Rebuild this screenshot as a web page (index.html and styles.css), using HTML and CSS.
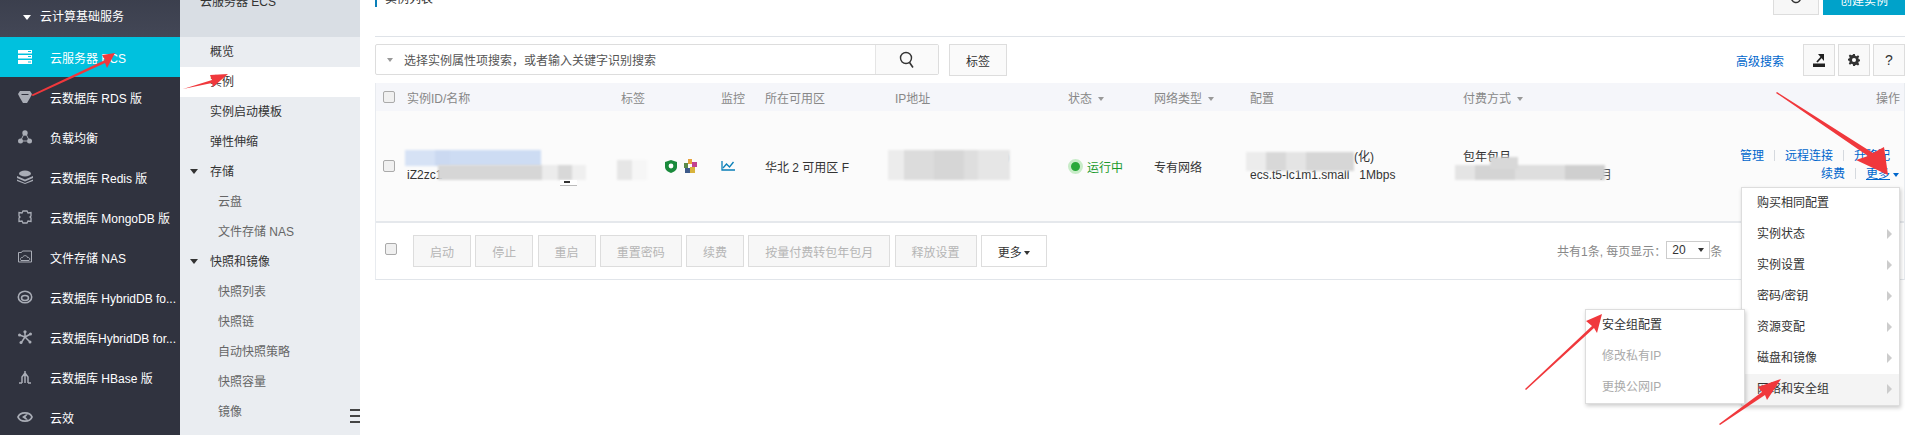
FILE: index.html
```html
<!DOCTYPE html>
<html lang="zh-CN">
<head>
    <meta charset="UTF-8">
    <title>云服务器 ECS - 实例列表</title>
    <link rel="stylesheet" href="styles.css">
</head>
<body>
    <div class="app">
        <aside class="sidebar">
            <div class="side-head"><span class="caret caret-white"></span>云计算基础服务</div>
            <a class="side-item active">
                <svg class="side-icon" viewBox="0 0 14 14"><path d="M0 0h14v3.600H0zM0 5h14v3.600H0zM0 10h14v4H0z" fill="#fff"/><path d="M10 1.500h3M10 6.500h3M10 12h3" stroke="#00c1de" stroke-width="1"/></svg>
                <span>云服务器 ECS</span>
            </a>
            <a class="side-item">
                <svg class="side-icon" viewBox="0 0 14 14"><path d="M2 1h10l2 3-2 4-3 5H5L2 8 0 4z" fill="#a9adb6"/><path d="M3.500 4.500h7" stroke="#30333f"/></svg>
                <span>云数据库 RDS 版</span>
            </a>
            <a class="side-item">
                <svg class="side-icon" viewBox="0 0 14 14"><g fill="#a9adb6"><circle cx="7" cy="3" r="2.700"/><circle cx="2.500" cy="11" r="2.500"/><circle cx="11.500" cy="11" r="2.500"/></g><path d="M5.500 5 3.500 9M8.500 5l2 4M5 11h4" stroke="#a9adb6"/></svg>
                <span>负载均衡</span>
            </a>
            <a class="side-item">
                <svg class="side-icon side-icon-wide" viewBox="0 0 16 14"><g fill="#a9adb6"><ellipse cx="8" cy="3.500" rx="6" ry="3"/><path d="M0 6l8 3.500L16 6v2l-8 3.500L0 8zM0 9.500 8 13l8-3.500V11l-8 3-8-3z"/></g></svg>
                <span>云数据库 Redis 版</span>
            </a>
            <a class="side-item">
                <svg class="side-icon" viewBox="0 0 14 14"><path d="M5 1h4l1 2 3-.5V6l-1 1 1 1v3.500L10 11l-1 2H5l-1-2-3 .5V8l1-1-1-1V2.500L4 3z" fill="none" stroke="#a9adb6" stroke-width="1.300"/></svg>
                <span>云数据库 MongoDB 版</span>
            </a>
            <a class="side-item">
                <svg class="side-icon" viewBox="0 0 14 14"><path d="M.5 2.500h3l1-1.500h9v11H.5z" fill="none" stroke="#a9adb6"/><path d="M3 10.500c-1.500-2 .5-3.500 1.500-3C5.500 5 9 5 9.500 7.500c2-.5 3 2 1.500 3z" fill="none" stroke="#a9adb6"/></svg>
                <span>文件存储 NAS</span>
            </a>
            <a class="side-item">
                <svg class="side-icon side-icon-wide" viewBox="0 0 15 14"><ellipse cx="7.500" cy="7" rx="6.700" ry="5.800" fill="none" stroke="#a9adb6" stroke-width="1.600"/><ellipse cx="7.500" cy="8" rx="3.500" ry="2.500" fill="none" stroke="#a9adb6" stroke-width="1.500"/></svg>
                <span>云数据库 HybridDB fo...</span>
            </a>
            <a class="side-item">
                <svg class="side-icon" viewBox="0 0 14 14"><path d="M7 1v6M7 7 1.500 5M7 7l5.500-3M7 7l-4 6M7 7l5 5" stroke="#a9adb6" stroke-width="1.500"/><g fill="#a9adb6"><circle cx="7" cy="1.800" r="1.600"/><circle cx="1.500" cy="5" r="1.500"/><circle cx="12.500" cy="4" r="1.500"/><circle cx="3" cy="12.500" r="1.500"/><circle cx="12" cy="12" r="1.500"/></g></svg>
                <span>云数据库HybridDB for...</span>
            </a>
            <a class="side-item">
                <svg class="side-icon" viewBox="0 0 14 14"><path d="M7 1v12M7 3 4 7v6M7 3l3 4v6M1 13h3M10 13h3" fill="none" stroke="#a9adb6" stroke-width="1.500"/></svg>
                <span>云数据库 HBase 版</span>
            </a>
            <a class="side-item">
                <svg class="side-icon side-icon-wide" viewBox="0 0 16 14"><path d="M1 7C3 1.500 13 1.500 15 7 13 12.500 3 12.500 1 7z" fill="none" stroke="#a9adb6" stroke-width="1.800"/><path d="M5 7l4-2.800h2L8.500 7 11 9.800H9z" fill="#a9adb6"/></svg>
                <span>云效</span>
            </a>
        </aside>

        <nav class="subnav">
            <div class="subnav-head">云服务器 ECS</div>
            <a class="sub-item">概览</a>
            <a class="sub-item current">实例</a>
            <a class="sub-item">实例启动模板</a>
            <a class="sub-item">弹性伸缩</a>
            <a class="sub-item"><span class="caret caret-dark"></span>存储</a>
            <a class="sub-item child">云盘</a>
            <a class="sub-item child">文件存储 NAS</a>
            <a class="sub-item"><span class="caret caret-dark"></span>快照和镜像</a>
            <a class="sub-item child">快照列表</a>
            <a class="sub-item child">快照链</a>
            <a class="sub-item child">自动快照策略</a>
            <a class="sub-item child">快照容量</a>
            <a class="sub-item child">镜像</a>
        </nav>

        <main class="main">
            <header class="page-head">
                <h2 class="page-title">实例列表</h2>
                <div class="page-actions">
                    <button class="btn btn-refresh">
                        <svg width="14" height="14" viewBox="0 0 14 14"><path d="M11.500 7a4.500 4.500 0 1 1-2-3.700" fill="none" stroke="#333" stroke-width="1.500"/><path d="M8 0v6l3.500-3z" fill="#333"/></svg>
                    </button>
                    <button class="btn btn-primary">创建实例</button>
                </div>
            </header>

            <div class="toolbar">
                <div class="search">
                    <span class="caret caret-grey"></span>
                    <span class="search-text">选择实例属性项搜索，或者输入关键字识别搜索</span>
                    <span class="search-btn">
                        <svg width="16" height="18" viewBox="0 0 16 18"><circle cx="7" cy="7" r="5.500" fill="none" stroke="#333" stroke-width="1.400"/><path d="M10.500 11.500 14 16.500" stroke="#333" stroke-width="1.600"/></svg>
                    </span>
                </div>
                <button class="btn btn-tag">标签</button>
                <div class="toolbar-right">
                    <a class="link adv-link">高级搜索</a>
                    <button class="btn btn-icon">
                        <svg width="12" height="13" viewBox="0 0 12 13"><path d="M0 9.500h12V13H0z" fill="#222"/><path d="M4 8 8.500 3" stroke="#222" stroke-width="1.800"/><path d="M5 0h6v7z" fill="#222"/></svg>
                    </button>
                    <button class="btn btn-icon">
                        <svg width="12" height="12" viewBox="0 0 14 14"><path d="M6 0h2l.4 2 1.500.6L11.700 1.500l1.400 1.400-1.100 1.800.6 1.500 2 .4v1.800l-2 .4-.6 1.500 1.100 1.800-1.400 1.400-1.800-1.100-1.500.6L8 14H6l-.4-2-1.500-.6-1.800 1.100L.9 11.100 2 9.300l-.6-1.500-2-.4V5.600l2-.4.6-1.500-1.100-1.800L2.300 .5l1.800 1.100L5.600 1z" fill="#333"/><circle cx="7" cy="7" r="2.400" fill="#fff"/></svg>
                    </button>
                    <button class="btn btn-icon">?</button>
                </div>
            </div>

            <section class="table">
                <div class="cols table-head">
                    <span><i class="check"></i></span>
                    <span>实例ID/名称</span>
                    <span>标签</span>
                    <span>监控</span>
                    <span>所在可用区</span>
                    <span>IP地址</span>
                    <span>状态<i class="caret caret-grey caret-after"></i></span>
                    <span>网络类型<i class="caret caret-grey caret-after"></i></span>
                    <span>配置</span>
                    <span>付费方式<i class="caret caret-grey caret-after"></i></span>
                    <span class="align-right">操作</span>
                </div>
                <div class="cols table-row">
                    <span><i class="check"></i></span>
                    <span class="two-lines">
                        <a class="link">&nbsp;</a>
                        <span class="id-text">iZ2zc1</span>
                    </span>
                    <span class="tag-icons">
                        <svg width="12" height="13" viewBox="0 0 12 13"><path d="M6 0l6 2v5c0 3-3 5-6 6-3-1-6-3-6-6V2z" fill="#1a8a3c"/><circle cx="6" cy="6" r="2.400" fill="#fff"/></svg>
                        <svg width="14" height="14" viewBox="0 0 14 14"><path d="M5 0h4v5H5z" fill="#e8a33d"/><path d="M9 3h5v5H9z" fill="#c2408f"/><path d="M7 8h5v6H7z" fill="#d8b33c"/><path d="M1 4h4v5H1z" fill="#5b8a4a"/><path d="M2 9h5v5H2z" fill="#3d5a8a"/></svg>
                    </span>
                    <span>
                        <svg class="monitor" width="14" height="10" viewBox="0 0 14 10"><path d="M1 0v9h13" fill="none" stroke="#0a7fb8" stroke-width="1.300"/><path d="M2 7l3.500-4 3 3 4-5" fill="none" stroke="#0a7fb8" stroke-width="1.300"/></svg>
                    </span>
                    <span class="zone">华北 2 可用区 F</span>
                    <span class="ip-cell"><span class="ip-end">1)</span></span>
                    <span class="status"><i class="status-dot"></i>运行中</span>
                    <span class="zone">专有网络</span>
                    <span class="two-lines">
                        <span class="config-top">(化)</span>
                        <span>ecs.t5-lc1m1.small &nbsp; 1Mbps</span>
                    </span>
                    <span class="two-lines">
                        <span>包年包月</span>
                        <span class="pay-end">月</span>
                    </span>
                    <span class="row-actions">
                        <span class="action-line action-first"><a class="link">管理</a><i class="sep"></i><a class="link">远程连接</a><i class="sep"></i><a class="link">升降配</a></span>
                        <span class="action-line"><a class="link">续费</a><i class="sep"></i><a class="link more-link">更多</a><i class="caret caret-blue"></i></span>
                    </span>

                    <div class="mask mask-name"></div>
                    <div class="mask mask-id"></div>
                    <div class="mask-copy"></div>
                    <div class="mask mask-tag"></div>
                    <div class="mask mask-ip"></div>
                    <div class="mask mask-config"></div>
                    <div class="mask mask-pay"></div>
                    <div class="mask mask-pay-top"></div>
                </div>
                <div class="table-foot">
                    <i class="check check-foot"></i>
                    <div class="foot-btns">
                        <button class="btn btn-off">启动</button>
                        <button class="btn btn-off">停止</button>
                        <button class="btn btn-off">重启</button>
                        <button class="btn btn-off">重置密码</button>
                        <button class="btn btn-off">续费</button>
                        <button class="btn btn-off">按量付费转包年包月</button>
                        <button class="btn btn-off">释放设置</button>
                        <button class="btn btn-more">更多<i class="caret caret-black"></i></button>
                    </div>
                    <div class="pager">
                        <span>共有1条, 每页显示：</span><span class="page-size">20<i class="caret caret-black"></i></span><span>条</span>
                    </div>
                </div>
            </section>
        </main>
    </div>

    <div class="collapse-tab"><i></i><i></i><i></i></div>

    <ul class="menu menu-more">
        <li>购买相同配置</li>
        <li class="has-sub">实例状态</li>
        <li class="has-sub">实例设置</li>
        <li class="has-sub">密码/密钥</li>
        <li class="has-sub">资源变配</li>
        <li class="has-sub">磁盘和镜像</li>
        <li class="has-sub hovered">网络和安全组</li>
    </ul>
    <ul class="menu menu-sub">
        <li>安全组配置</li>
        <li class="disabled">修改私有IP</li>
        <li class="disabled">更换公网IP</li>
    </ul>

    <svg class="arrows" width="1914" height="435" viewBox="0 0 1914 435">
        <g fill="#f0383c">
            <path d="M31 95 105 60 102 55 115 53 107 68 105 63 33 96z"/>
            <path d="M183 89 212 80 210 75 228 74 213 87 212 83z"/>
            <path d="M1776 93 1868 156 1856 160 1888 175 1884 147 1873 153 1777 92z"/>
            <path d="M1525 389 1592 326 1586 321 1602 314 1597 333 1594 328 1526 390z"/>
            <path d="M1719 424 1762 392 1758 387 1781 379 1767 400 1765 395 1720 425z"/>
        </g>
    </svg>
</body>
</html>
```

FILE: styles.css
```css
* {
    box-sizing: border-box;
}
html, body {
    margin: 0;
    height: 435px;
    overflow: hidden;
}
body {
    position: relative;
    background: #fff;
    font-family: "Liberation Sans", "Noto Sans CJK SC", sans-serif;
    font-size: 12px;
    color: #333;
}
ul {
    list-style: none;
    margin: 0;
    padding: 0;
}
button {
    font: inherit;
    color: inherit;
}

/* page is scrolled 20px in the shot */
.app {
    display: flex;
    height: 455px;
    margin-top: -20px;
}

.caret {
    display: inline-block;
    width: 0;
    height: 0;
    border-left: 4px solid transparent;
    border-right: 4px solid transparent;
    border-top: 5px solid #333;
}
.caret-white {
    border-top-color: #fff;
    margin: 0 9px 1px 0;
    vertical-align: middle;
}
.caret-dark {
    position: absolute;
    left: 10px;
    top: 12px;
}
.caret-grey {
    border-left-width: 3px;
    border-right-width: 3px;
    border-top: 4px solid #999;
}
.caret-after {
    margin-left: 6px;
    vertical-align: middle;
}
.caret-blue {
    border-left-width: 3px;
    border-right-width: 3px;
    border-top: 4px solid #06c;
    margin-left: 3px;
    vertical-align: middle;
}
.caret-black {
    border-left-width: 3px;
    border-right-width: 3px;
    border-top: 4px solid #333;
    margin-left: 2px;
    vertical-align: middle;
}

.sidebar {
    width: 180px;
    flex: none;
    background: #30333f;
    color: #fff;
}
.side-head {
    height: 57px;
    padding: 28px 0 0 23px;
    line-height: 18px;
    background: linear-gradient(#373b49, #434756);
}
.side-item {
    display: flex;
    align-items: center;
    height: 40px;
    padding-left: 18px;
    gap: 18px;
    white-space: nowrap;
}
.side-item.active {
    background: #00c1de;
}
.side-icon {
    width: 14px;
    height: 14px;
    flex: none;
}
.side-icon-wide {
    width: 16px;
    margin: 0 -1px;
}

.subnav {
    width: 180px;
    flex: none;
    background: #eaedf1;
}
.subnav-head {
    height: 57px;
    padding: 13px 0 0 20px;
    line-height: 18px;
    background: #d9dee4;
}
.sub-item {
    display: block;
    position: relative;
    height: 30px;
    line-height: 30px;
    padding-left: 30px;
}
.sub-item.current {
    background: #fff;
}
.sub-item.child {
    padding-left: 38px;
    color: #666;
}

.main {
    flex: 1;
    min-width: 0;
    padding: 0 9px 0 15px;
}
.page-head {
    display: flex;
    justify-content: space-between;
    align-items: flex-end;
    height: 57px;
    padding-bottom: 29px;
    border-bottom: 1px solid #dfe3e8;
}
.page-title {
    margin: 0;
    padding-left: 8px;
    border-left: 2px solid #0a7fb8;
    font-size: 12px;
    font-weight: normal;
    line-height: 16px;
}
.page-actions {
    display: flex;
    gap: 4px;
    align-self: flex-start;
    margin-top: 3px;
}
.btn {
    border: 1px solid #ddd;
    background: #fff;
    padding: 0;
    border-radius: 0;
}
.btn-refresh {
    width: 46px;
    height: 32px;
    background: #f7f7f7;
}
.btn-primary {
    width: 82px;
    height: 32px;
    border: 0;
    background: #00a2ca;
    color: #fff;
}

.toolbar {
    display: flex;
    align-items: flex-start;
    margin-top: 7px;
    height: 39px;
}
.search {
    display: flex;
    align-items: center;
    width: 564px;
    height: 31px;
    border: 1px solid #ddd;
    border-radius: 2px;
    padding-left: 11px;
}
.search-text {
    flex: 1;
    margin-left: 11px;
    color: #555;
}
.search-btn {
    display: flex;
    align-items: center;
    justify-content: center;
    width: 63px;
    height: 100%;
    border-left: 1px solid #e5e5e5;
    background: #fafafa;
}
.btn-tag {
    width: 58px;
    height: 32px;
    margin-left: 10px;
    background: #fafafa;
}
.toolbar-right {
    display: flex;
    align-items: center;
    gap: 3px;
    margin-left: auto;
}
.adv-link {
    margin-right: 16px;
}
.btn-icon {
    display: flex;
    align-items: center;
    justify-content: center;
    width: 32px;
    height: 32px;
    background: #f9f9f9;
    font-size: 14px;
}
.link {
    color: #06c;
}

.table {
    border: 1px solid #e8ebef;
    border-top: 0;
    border-bottom: 1px solid #e1e5ea;
}
.cols {
    display: grid;
    grid-template-columns: 31px 214px 100px 44px 130px 173px 86px 96px 213px 1fr 90px;
    align-items: center;
}
.table-head {
    height: 28px;
    background: #f5f6fa;
    color: #888;
}
.table-row {
    position: relative;
    height: 112px;
    background: #fbfbfb;
    border-bottom: 2px solid #e5e8ec;
}
.align-right {
    text-align: right;
    padding-right: 4px;
}
.check {
    display: block;
    width: 12px;
    height: 12px;
    margin-left: 7px;
    border: 1px solid #aaa;
    border-radius: 2px;
    background: #f0f0f0;
}
.two-lines {
    display: flex;
    flex-direction: column;
    line-height: 18px;
    white-space: nowrap;
}
.id-text {
    color: #333;
}
.tag-icons {
    display: flex;
    align-items: center;
    gap: 6px;
    margin-left: 44px;
}
.monitor {
    display: block;
}
.zone {
    color: #333;
}
.ip-end {
    display: block;
    padding: 0 0 18px 104px;
    color: #999;
}
.status {
    display: flex;
    align-items: center;
    color: #1a9a2c;
}
.status-dot {
    width: 15px;
    height: 15px;
    margin-right: 4px;
    border-radius: 50%;
    background: #2aa83a;
    border: 3px solid #c8ecc8;
}
.config-top {
    padding-left: 104px;
}
.pay-end {
    padding-left: 137px;
    color: #555;
}
.row-actions {
    position: absolute;
    top: 36px;
    right: 5px;
    text-align: right;
    line-height: 18px;
}
.action-line {
    display: block;
    white-space: nowrap;
}
.action-first {
    padding-right: 9px;
}
.sep {
    display: inline-block;
    width: 1px;
    height: 11px;
    margin: 0 10px;
    background: #d5d9de;
    vertical-align: -1px;
}
.more-link {
    text-decoration: underline;
}

/* blurred out names in the shot */
.mask {
    position: absolute;
    filter: blur(1px);
}
.mask-name {
    left: 29px;
    top: 39px;
    width: 136px;
    height: 16px;
    background: linear-gradient(90deg, #d6e2f5 0 30px, #cbd9f1 30px 45px, #cddcf3 45px);
}
.mask-id {
    left: 62px;
    top: 54px;
    width: 148px;
    height: 15px;
    background: linear-gradient(90deg, #d6d6d6 0 104px, #ececec 104px 120px, #d8d8d8 120px 134px, #efefef 134px);
}
.mask-copy {
    position: absolute;
    left: 184px;
    top: 69px;
    width: 17px;
    height: 6px;
    padding: 1px 0 0 4px;
    background: #fff;
    border-bottom: 1px solid #bbb;
}
.mask-copy::after {
    content: "";
    display: block;
    width: 6px;
    height: 2px;
    background: #333;
}
.mask-tag {
    left: 241px;
    top: 49px;
    width: 30px;
    height: 20px;
    background: linear-gradient(90deg, #e6e6e6 0 15px, #f6f6f6 15px);
}
.mask-ip {
    left: 512px;
    top: 39px;
    width: 122px;
    height: 30px;
    background: linear-gradient(90deg, #ececec 0 16px, #dcdcdc 16px 46px, #d6d6d6 46px 76px, #dedede 76px 90px, #e6e6e6 90px);
}
.mask-config {
    left: 870px;
    top: 41px;
    width: 108px;
    height: 19px;
    background: linear-gradient(90deg, #ececec 0 20px, #d8d8d8 20px 40px, #e4e4e4 40px 60px, #d6d6d6 60px);
}
.mask-pay {
    left: 1079px;
    top: 54px;
    width: 150px;
    height: 15px;
    background: linear-gradient(90deg, #e4e4e4 0 20px, #d4d4d4 20px 60px, #dedede 60px 110px, #cfcfcf 110px);
}
.mask-pay-top {
    left: 1114px;
    top: 46px;
    width: 28px;
    height: 12px;
    background: #d8d8d8;
}

.table-foot {
    display: flex;
    align-items: flex-start;
    position: relative;
    height: 56px;
    padding-top: 12px;
}
.check-foot {
    flex: none;
    margin: 8px 0 0 9px;
}
.foot-btns {
    display: flex;
    gap: 4.25px;
    margin-left: 16px;
}
.btn-off {
    height: 32px;
    padding: 0 16px;
    background: #f7f7f7;
    color: #b5b5b5;
}
.btn-more {
    height: 32px;
    padding: 0 16px;
    background: #fff;
}
.pager {
    display: flex;
    align-items: center;
    position: absolute;
    left: 1181px;
    top: 18px;
    height: 18px;
    color: #888;
    white-space: nowrap;
}
.page-size {
    display: inline-flex;
    align-items: center;
    justify-content: space-between;
    width: 44px;
    height: 18px;
    padding: 0 5px;
    border: 1px solid #ccc;
    color: #333;
}

.collapse-tab {
    position: absolute;
    left: 350px;
    top: 409px;
    display: flex;
    flex-direction: column;
    gap: 4px;
    width: 10px;
}
.collapse-tab i {
    display: block;
    height: 2px;
    background: #444;
}

.menu {
    position: absolute;
    background: #fff;
    border: 1px solid #ddd;
    box-shadow: 1px 2px 4px rgba(0, 0, 0, 0.2);
}
.menu li {
    position: relative;
    height: 31px;
    line-height: 31px;
}
.menu-more {
    left: 1741px;
    top: 187px;
    width: 159px;
}
.menu-more li {
    padding-left: 15px;
}
.menu li.has-sub::after {
    content: "";
    position: absolute;
    right: 7px;
    top: 10px;
    border-left: 5px solid #ccc;
    border-top: 5px solid transparent;
    border-bottom: 5px solid transparent;
}
.menu li.hovered {
    background: #f4f4f4;
}
.menu-sub {
    left: 1585px;
    top: 309px;
    width: 160px;
}
.menu-sub li {
    padding-left: 16px;
}
.menu li.disabled {
    color: #aaa;
}

.arrows {
    position: absolute;
    left: 0;
    top: 0;
    pointer-events: none;
}
```
